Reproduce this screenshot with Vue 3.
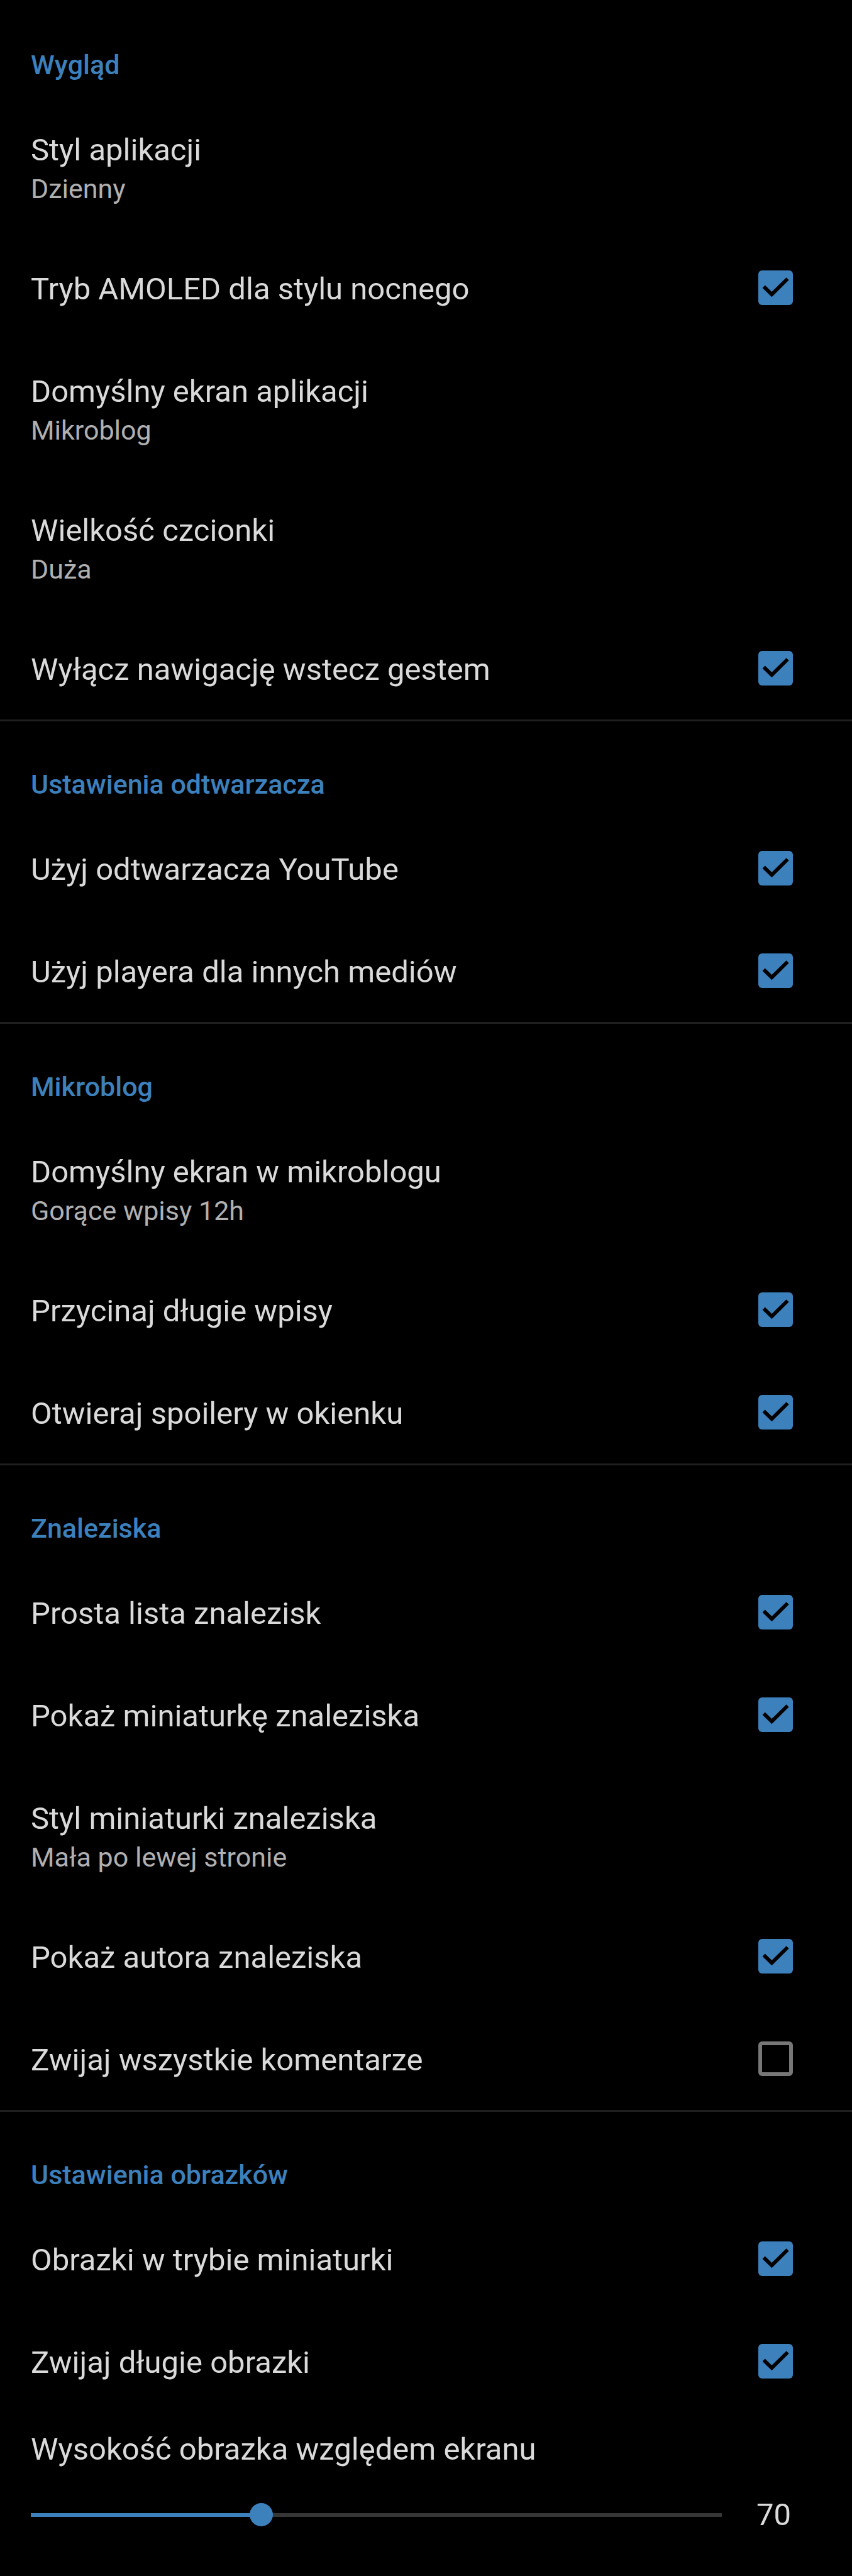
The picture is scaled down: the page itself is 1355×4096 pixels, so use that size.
<script setup>
import { computed, reactive, ref } from 'vue'

const sections = reactive([
  {
    title: 'Wygląd',
    items: [
      { title: 'Styl aplikacji', summary: 'Dzienny' },
      { title: 'Tryb AMOLED dla stylu nocnego', checked: true },
      { title: 'Domyślny ekran aplikacji', summary: 'Mikroblog' },
      { title: 'Wielkość czcionki', summary: 'Duża' },
      { title: 'Wyłącz nawigację wstecz gestem', checked: true },
    ],
  },
  {
    title: 'Ustawienia odtwarzacza',
    items: [
      { title: 'Użyj odtwarzacza YouTube', checked: true },
      { title: 'Użyj playera dla innych mediów', checked: true },
    ],
  },
  {
    title: 'Mikroblog',
    items: [
      { title: 'Domyślny ekran w mikroblogu', summary: 'Gorące wpisy 12h' },
      { title: 'Przycinaj długie wpisy', checked: true },
      { title: 'Otwieraj spoilery w okienku', checked: true },
    ],
  },
  {
    title: 'Znaleziska',
    items: [
      { title: 'Prosta lista znalezisk', checked: true },
      { title: 'Pokaż miniaturkę znaleziska', checked: true },
      { title: 'Styl miniaturki znaleziska', summary: 'Mała po lewej stronie' },
      { title: 'Pokaż autora znaleziska', checked: true },
      { title: 'Zwijaj wszystkie komentarze', checked: false },
    ],
  },
  {
    title: 'Ustawienia obrazków',
    items: [
      { title: 'Obrazki w trybie miniaturki', checked: true },
      { title: 'Zwijaj długie obrazki', checked: true },
    ],
  },
])

const minHeight = 60
const maxHeight = 90
const imageHeight = ref(70)
const fill = computed(() => (imageHeight.value - minHeight) / (maxHeight - minHeight))
</script>

<template>
  <main class="settings">
    <section v-for="section in sections" :key="section.title" class="section">
      <h2 class="heading">{{ section.title }}</h2>
      <template v-for="item in section.items" :key="item.title">
        <button v-if="item.summary" type="button" class="row choice">
          <span class="title">{{ item.title }}</span>
          <span class="summary">{{ item.summary }}</span>
        </button>
        <label v-else class="row toggle">
          <span class="title">{{ item.title }}</span>
          <input v-model="item.checked" type="checkbox" class="checkbox" />
        </label>
      </template>
    </section>

    <div class="seek">
      <label class="title" for="image-height">Wysokość obrazka względem ekranu</label>
      <div class="seek-bar">
        <input
          id="image-height"
          v-model.number="imageHeight"
          type="range"
          class="slider"
          :min="minHeight"
          :max="maxHeight"
          :style="{ '--fill': fill }"
        />
        <output class="title" for="image-height">{{ imageHeight }}</output>
      </div>
    </div>
  </main>
</template>

<style>
body {
  margin: 0;
  background: #000;
}
</style>

<style scoped>
.settings {
  --accent: #3c80bc;
  background: #000;
  color: #dadada;
  font-family: Roboto, "Noto Sans", sans-serif;
}

.heading {
  margin: 0;
  padding: 71px 49px 23px;
  border-top: 3px solid #1f1f1f;
  color: var(--accent);
  font-size: 43px;
  font-weight: 500;
  line-height: 58px;
}

.section:first-child .heading {
  border-top-color: transparent;
}

.row {
  display: flex;
  box-sizing: border-box;
  width: 100%;
  padding: 51px 94px 47px 49px;
}

.title {
  font-size: 49px;
  line-height: 65px;
}

.summary {
  color: #b0b0b0;
  font-size: 43px;
  line-height: 58px;
}

.choice {
  flex-direction: column;
  border: 0;
  background: none;
  color: inherit;
  font-family: inherit;
  text-align: left;
  cursor: pointer;
}

.toggle {
  align-items: flex-start;
  justify-content: space-between;
  cursor: pointer;
}

.checkbox {
  appearance: none;
  flex: none;
  box-sizing: border-box;
  width: 55px;
  height: 55px;
  margin: 3px 0 0;
  border: 6px solid #777;
  border-radius: 6px;
}

.checkbox:checked {
  border: 0;
  background: var(--accent);
}

.checkbox:checked::before {
  content: "";
  display: block;
  width: 100%;
  height: 100%;
  background: #000;
  clip-path: polygon(12% 50.5%, 19.5% 42.6%, 38.9% 61.6%, 81% 20.5%, 88.4% 27.9%, 38.9% 76.8%);
}

.seek {
  padding: 26px 97px 66px 49px;
}

.seek > .title {
  display: block;
}

.seek-bar {
  display: flex;
  align-items: center;
  gap: 37px;
  margin-top: 39px;
}

/* The thumb's radius hangs over each end of the visible track. */
.slider {
  --r: 18px;
  --stop: calc(var(--r) + var(--fill) * (100% - 2 * var(--r)));
  appearance: none;
  flex: 1;
  min-width: 0;
  height: 37px;
  margin: 0 0 0 -18px;
  background: linear-gradient(
      to right,
      transparent var(--r),
      var(--accent) var(--r) var(--stop),
      #363636 var(--stop) calc(100% - var(--r)),
      transparent calc(100% - var(--r))
    )
    center / 100% 6px no-repeat;
}

.slider::-webkit-slider-thumb {
  appearance: none;
  width: 37px;
  height: 37px;
  border-radius: 50%;
  background: var(--accent);
}
</style>
